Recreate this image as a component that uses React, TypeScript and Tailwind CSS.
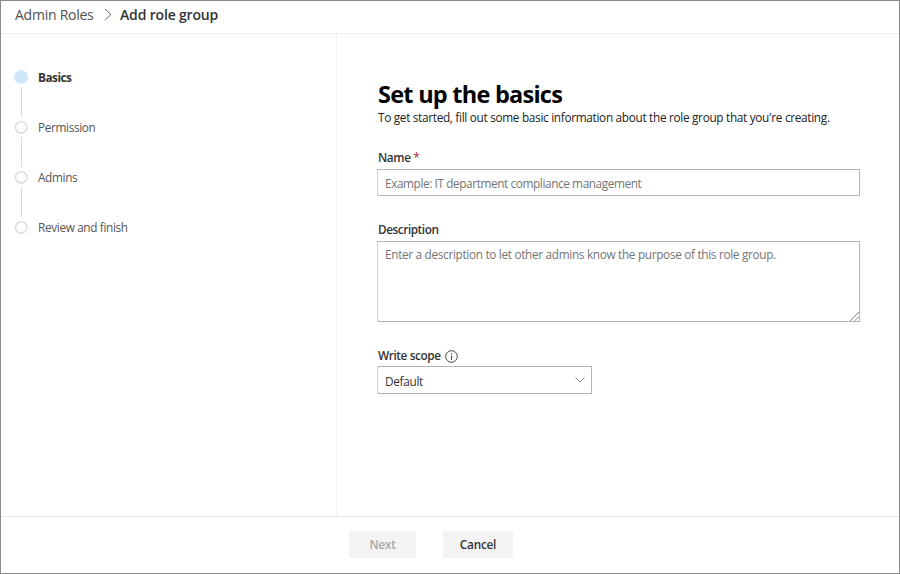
const steps = ["Permission", "Admins", "Review and finish"];

function Header() {
  return (
    <header className="flex h-[33px] shrink-0 items-center border-b border-[#efefef] pb-1 pl-[14px] text-[14px] leading-5">
      <span className="w-[79px] tracking-[-0.25px] whitespace-nowrap text-[#505050]">Admin Roles</span>
      <svg className="mr-[7px] ml-[10px] -translate-y-px" width="9" height="13" viewBox="0 0 9 13" fill="none" stroke="#707070">
        <path d="M1 1l6 5.5L1 12" />
      </svg>
      <span className="font-semibold tracking-[-0.17px] text-[#333]">Add role group</span>
    </header>
  );
}

function Stepper() {
  return (
    <nav className="w-[336px] shrink-0 border-r border-[#efefef] pt-[36px] pl-[13px] text-[11.8px] leading-[14px]">
      <div className="flex h-[14px] items-center">
        <span className="size-[14px] rounded-full bg-[#cfe6f8]" />
        <span className="ml-[10px] pb-px font-bold tracking-[-0.5px] text-[#333]">Basics</span>
      </div>
      {steps.map((label) => (
        <div key={label}>
          <div className="my-[3px] ml-[7px] h-[30px] w-px bg-[#d8d8d8]" />
          <div className="flex h-[14px] items-center">
            <svg width="14" height="14" viewBox="0 0 14 14" fill="none" stroke="#dedede" strokeWidth="1.6">
              <circle cx="7.2" cy="7.4" r="5.7" />
            </svg>
            <span className="ml-[10px] pb-px tracking-[-0.35px] text-[#555]">{label}</span>
          </div>
        </div>
      ))}
    </nav>
  );
}

function Form() {
  return (
    <main className="flex flex-1 flex-col items-start pt-[46px] pl-[40px] text-[11.8px] leading-4 text-[#333]">
      <h1 className="ml-px text-[23.5px] leading-7 font-bold tracking-[-0.75px] whitespace-nowrap text-black">Set up the basics</h1>
      <p className="mt-px ml-px tracking-[-0.31px] whitespace-nowrap text-[#222]">
        To get started, fill out some basic information about the role group that you're creating.
      </p>
      <label className="mt-[24px] ml-px font-semibold tracking-[-0.4px] whitespace-nowrap">
        Name <span className="font-normal text-[#a4262c]">*</span>
      </label>
      <input
        className="mt-[4px] h-[27px] w-[483px] rounded-none border border-[#b5b5b5] border-l-[#cfcfcf] px-[7px] tracking-[-0.4px] outline-none placeholder:text-[#757575]"
        placeholder="Example: IT department compliance management"
      />
      <label className="mt-[25px] ml-px font-semibold tracking-[-0.45px]">Description</label>
      <div className="relative mt-[4px] h-[81px] w-[483px]">
        <textarea
          className="block h-[81px] w-[483px] resize-none rounded-none border border-[#b5b5b5] border-l-[#cfcfcf] px-[7px] py-[4px] tracking-[-0.32px] outline-none placeholder:text-[#757575]"
          placeholder="Enter a description to let other admins know the purpose of this role group."
        />
        <svg className="absolute right-px bottom-px" width="9" height="9" viewBox="0 0 9 9" stroke="#777" strokeWidth="0.9">
          <path d="M0 9L9 0M4.5 9L9 4.5" />
        </svg>
      </div>
      <label className="mt-[26px] ml-px flex items-center font-semibold">
        <span className="-mt-px w-[67px] pb-px tracking-[-0.4px] whitespace-nowrap">Write scope</span>
        <svg width="13" height="13" viewBox="0 0 13 13" fill="none" stroke="#444">
          <circle cx="6.5" cy="6.5" r="5.8" />
          <path d="M6.5 5.5V10M6.5 3.2V4.4" />
        </svg>
      </label>
      <button className="mt-[2px] flex h-[28px] w-[215px] items-center justify-between border border-[#b5b5b5] border-l-[#cfcfcf] pr-[6px] pl-[7px]">
        <span className="pt-px tracking-[-0.31px]">Default</span>
        <svg width="10" height="6" viewBox="0 0 10 6" fill="none" stroke="#888">
          <path d="M.5.5L5 5L9.5.5" />
        </svg>
      </button>
    </main>
  );
}

export default function App() {
  return (
    <div className="flex h-[574px] w-[900px] flex-col overflow-hidden border border-[#8c8c8c] bg-white font-['Open_Sans',sans-serif]">
      <Header />
      <div className="flex min-h-0 flex-1">
        <Stepper />
        <Form />
      </div>
      <footer className="flex h-[57px] shrink-0 gap-[27px] border-t border-[#ebebeb] pt-[14px] pl-[348px] text-[11.8px] font-semibold tracking-[-0.25px]">
        <button className="h-[27px] w-[67px] bg-[#f3f3f3] pt-px text-[#a6a6a6]">Next</button>
        <button className="h-[27px] w-[70px] bg-[#f3f3f3] pt-px text-[#333]">Cancel</button>
      </footer>
    </div>
  );
}
